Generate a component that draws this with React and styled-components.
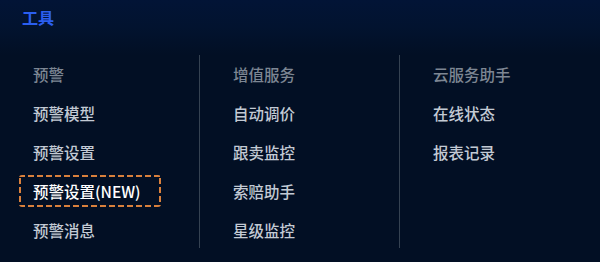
import React from 'react'
import styled, { createGlobalStyle, css } from 'styled-components'

const GlobalStyle = createGlobalStyle`
  html, body {
    margin: 0;
    padding: 0;
    background: #020f24;
  }
  body {
    font-family: "Noto Sans CJK SC", "Noto Sans", sans-serif;
  }
`;

const columns = [
  { title: '预警', items: ['预警模型', '预警设置', '预警设置(NEW)', '预警消息'], active: '预警设置(NEW)' },
  { title: '增值服务', items: ['自动调价', '跟卖监控', '索赔助手', '星级监控'] },
  { title: '云服务助手', items: ['在线状态', '报表记录'] },
]

function App() {
  return (
    <>
      <GlobalStyle />
      <Panel>
        <Header>
          <Title>工具</Title>
        </Header>
        <Grid>
          {columns.map((col, i) => (
            <Column key={col.title} $divider={i > 0}>
              <Row $heading>{col.title}</Row>
              {col.items.map((item) => (
                <Row key={item} $active={item === col.active}>{item}</Row>
              ))}
            </Column>
          ))}
        </Grid>
      </Panel>
    </>
  )
}

export default App

const Panel = styled.div`
  width: 600px;
  height: 262px;
  background: #020f24;
  overflow: hidden;
`;

const Header = styled.div`
  height: 55px;
  box-sizing: border-box;
  padding: 5px 22px 0;
  background: linear-gradient(180deg, #021436 0%, #02132f 50%, #020f24 100%);
`;

const Title = styled.div`
  color: #2b5ff0;
  font-size: 16px;
  font-weight: 700;
  line-height: 24px;
`;

const Grid = styled.div`
  display: grid;
  grid-template-columns: 199px 200px 1fr;
  align-items: start;
`;

const Column = styled.div`
  display: flex;
  flex-direction: column;
  gap: 7px;
  height: 193px;
  box-sizing: border-box;
  padding: 3px 0 2px;
  border-left: ${(p) => (p.$divider ? '1px solid #354252' : 'none')};
`;

const dash = '#d9803c';

const activeFrame = css`
  color: #ffffff;
  background:
    linear-gradient(90deg, ${dash} 62%, transparent 0) top left / 9px 2px repeat-x,
    linear-gradient(90deg, ${dash} 62%, transparent 0) bottom left / 9px 2px repeat-x,
    linear-gradient(0deg, ${dash} 62%, transparent 0) top left / 2px 9px repeat-y,
    linear-gradient(0deg, ${dash} 62%, transparent 0) top right / 2px 9px repeat-y;
`;

const Row = styled.div`
  align-self: flex-start;
  height: 32px;
  box-sizing: border-box;
  margin-left: 19px;
  padding: 0 20px 0 14px;
  display: flex;
  align-items: center;
  font-size: 15.5px;
  font-weight: 500;
  white-space: nowrap;
  border-radius: 3px;
  color: ${(p) => (p.$heading ? '#7d8693' : '#c3cad4')};
  ${(p) => p.$active && activeFrame}
`;
